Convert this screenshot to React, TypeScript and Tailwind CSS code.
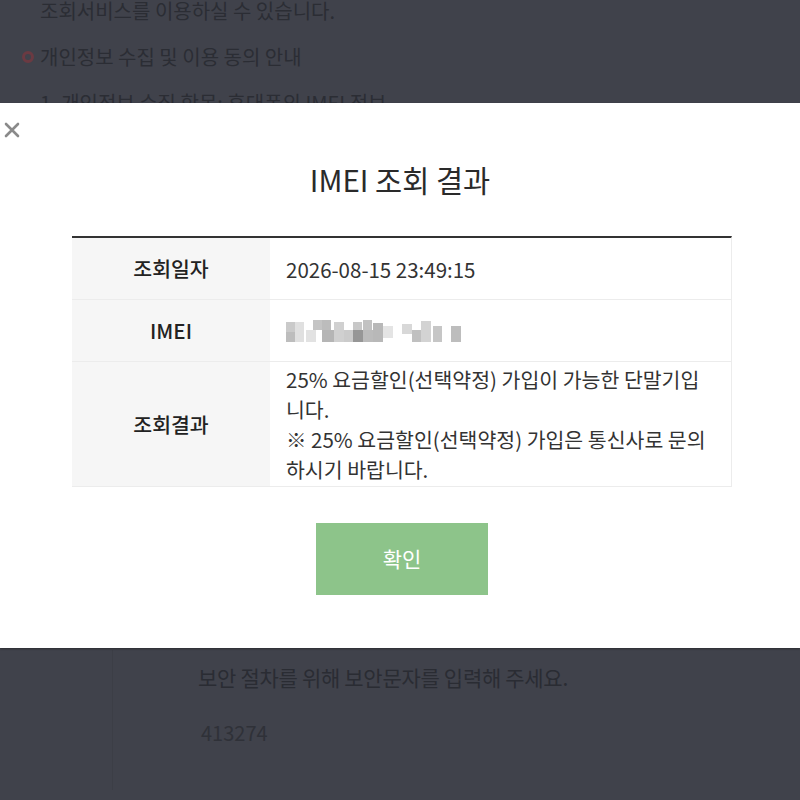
import React from 'react';

const FONT = { fontFamily: '"Noto Sans CJK KR", "Noto Sans", sans-serif' };

// blurred IMEI value (pixel mosaic)
const mosaic: { x: number; y: number; w: number; h: number; c: string }[] = [
    { x: 0, y: 3, w: 9, h: 10, c: '#cacaca' },
    { x: 0, y: 13, w: 9, h: 10, c: '#bdbdbd' },
    { x: 9, y: 3, w: 9, h: 20, c: '#e0e0e0' },
    { x: 27, y: 1, w: 9, h: 10, c: '#c4c4c4' },
    { x: 20, y: 11, w: 10, h: 12, c: '#e2e2e2' },
    { x: 36, y: 1, w: 9, h: 10, c: '#bcbcbc' },
    { x: 36, y: 11, w: 12, h: 12, c: '#b5b5b5' },
    { x: 48, y: 3, w: 10, h: 20, c: '#d0d0d0' },
    { x: 58, y: 11, w: 9, h: 12, c: '#cbcbcb' },
    { x: 67, y: 3, w: 9, h: 8, c: '#c8c8c8' },
    { x: 67, y: 11, w: 10, h: 12, c: '#969696' },
    { x: 77, y: 1, w: 9, h: 10, c: '#c2c2c2' },
    { x: 77, y: 11, w: 10, h: 12, c: '#bbbbbb' },
    { x: 87, y: 4, w: 10, h: 19, c: '#b8b8b8' },
    { x: 97, y: 7, w: 10, h: 12, c: '#e4e4e4' },
    { x: 116, y: 5, w: 10, h: 10, c: '#d8d8d8' },
    { x: 126, y: 11, w: 9, h: 12, c: '#c0c0c0' },
    { x: 135, y: 2, w: 10, h: 21, c: '#d3d3d3' },
    { x: 147, y: 7, w: 9, h: 16, c: '#c6c6c6' },
    { x: 165, y: 7, w: 10, h: 16, c: '#bdbdbd' },
];

function Mosaic() {
    return (
        <svg width="176" height="24" viewBox="0 0 176 24" className="blur-[0.6px]">
            {mosaic.map((m, i) => (
                <rect key={i} x={m.x} y={m.y} width={m.w} height={m.h} fill={m.c} />
            ))}
        </svg>
    );
}

function Row({ label, children, tall }: { label: string; children: React.ReactNode; tall?: boolean }) {
    return (
        <div className={`flex border-b border-[#ececec] ${tall ? 'min-h-[124px]' : 'h-[62px]'}`}>
            <div className="w-[198px] shrink-0 bg-[#f6f6f6] flex items-center justify-center text-[20.5px] font-medium text-[#222]">
                {label}
            </div>
            <div className="flex-1 flex items-center pl-4 pr-[14px] text-[20.5px] text-[#333] leading-[30px]">
                {children}
            </div>
        </div>
    );
}

export default function App() {
    return (
        <div className="relative w-[800px] h-[800px] overflow-hidden bg-[#40424b]" style={FONT}>
            {/* background page */}
            <div className="text-[20px] text-[#2b2d34]">
                <p className="pl-10 -mt-[4px] leading-[30px]">조회서비스를 이용하실 수 있습니다.</p>
                <p className="flex items-center mt-[16px] pl-[22px] leading-[30px]">
                    <span className="w-[12px] h-[12px] rounded-full border-[3px] border-[#6b3a42] mr-[6px]" />
                    개인정보 수집 및 이용 동의 안내
                </p>
                <p className="pl-[40px] mt-[16px] leading-[30px]">1. 개인정보 수집 항목: 휴대폰의 IMEI 정보</p>
            </div>

            <div className="absolute left-[112px] top-[650px] w-[600px] h-[140px] border-l border-[#3c3e46]">
                <p className="ml-[85px] mt-[12px] text-[21px] text-[#2a2c33] tracking-[-0.3px]">
                    보안 절차를 위해 보안문자를 입력해 주세요.
                </p>
                <p className="ml-[88px] mt-[24px] text-[20px] text-[#2f3138]">413274</p>
            </div>

            {/* modal */}
            <div className="absolute left-0 right-0 top-[103px] h-[545px] bg-white shadow-[0_1px_2px_rgba(0,0,0,0.35)]">
                <button className="absolute left-[3px] top-[18px] w-[18px] h-[18px] flex items-center justify-center">
                    <svg width="16" height="16" viewBox="0 0 16 16">
                        <path d="M2 2 L14 14 M14 2 L2 14" stroke="#8a8a8a" strokeWidth="2.6" strokeLinecap="round" />
                    </svg>
                </button>

                <h2 className="text-center text-[29.5px] text-[#2a2a2a] mt-[55px] leading-[42px]">IMEI 조회 결과</h2>

                <div className="ml-[72px] mr-[68px] mt-[36px] border-t-2 border-[#333] border-r border-r-[#ececec]">
                    <Row label="조회일자">2026-08-15 23:49:15</Row>
                    <Row label="IMEI">
                        <Mosaic />
                    </Row>
                    <Row label="조회결과" tall>
                        <div className="py-[2px]">
                            25% 요금할인(선택약정) 가입이 가능한 단말기입니다.
                            <br />
                            ※ 25% 요금할인(선택약정) 가입은 통신사로 문의하시기 바랍니다.
                        </div>
                    </Row>
                </div>

                <div className="flex justify-center mt-[36px]">
                    <button className="w-[172px] h-[72px] ml-[4px] bg-[#8dc48a] text-white text-[21px]">확인</button>
                </div>
            </div>
        </div>
    );
}
